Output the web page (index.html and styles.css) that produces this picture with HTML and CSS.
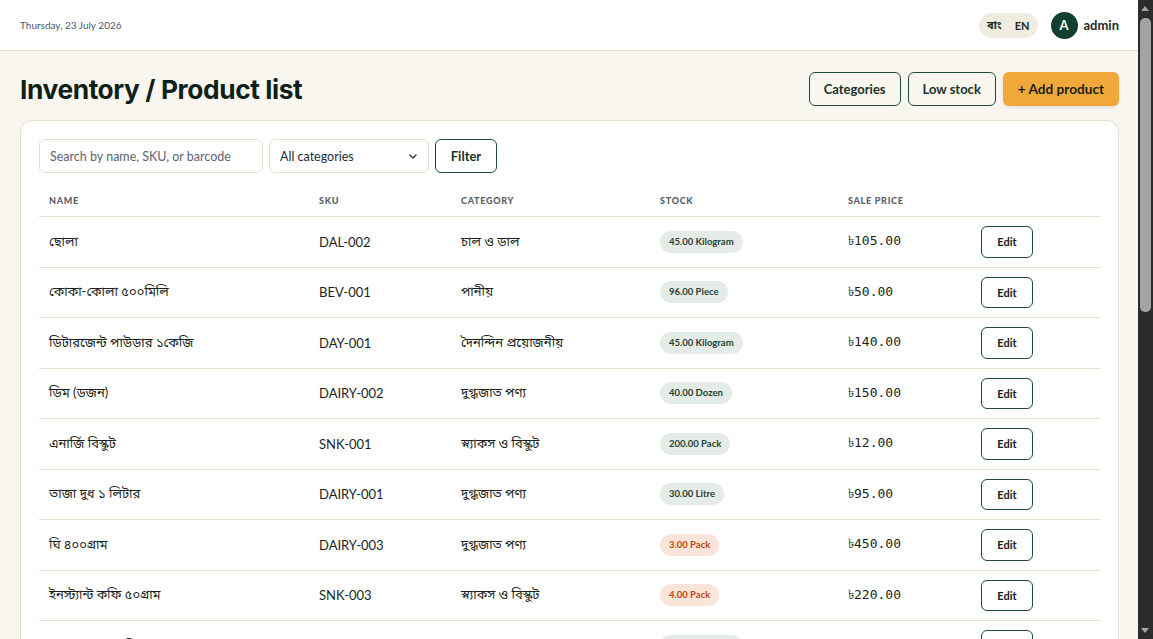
FILE: index.html
```html
<!DOCTYPE html>
<html lang="bn">
<head>
    <meta charset="UTF-8">
    <meta name="viewport" content="width=device-width, initial-scale=1.0">
    <title>Inventory / Product list</title>
    <link rel="stylesheet" href="styles.css">
</head>
<body>
    <header class="topbar">
        <div class="today">Thursday, 23 July 2026</div>
        <div class="topbar-right">
            <div class="lang-switch">
                <span class="lang">বাং</span>
                <span class="lang">EN</span>
            </div>
            <div class="user">
                <span class="avatar">A</span>
                <span class="user-name">admin</span>
            </div>
        </div>
    </header>

    <main class="page">
        <div class="page-head">
            <h1>Inventory / Product list</h1>
            <div class="page-actions">
                <button class="btn btn-outline">Categories</button>
                <button class="btn btn-outline">Low stock</button>
                <button class="btn btn-primary">+ Add product</button>
            </div>
        </div>

        <section class="card">
            <form class="filters">
                <input type="text" class="field field-search" placeholder="Search by name, SKU, or barcode">
                <div class="select-wrap">
                    <select class="field field-select">
                        <option>All categories</option>
                    </select>
                    <svg class="chevron" width="12" height="12" viewBox="0 0 12 12"><path d="M2.5 4.5 6 8l3.5-3.5" fill="none" stroke="#333" stroke-width="1.3"/></svg>
                </div>
                <button type="button" class="btn btn-outline btn-filter">Filter</button>
            </form>

            <table class="products">
                <colgroup>
                    <col style="width: 270px">
                    <col style="width: 142px">
                    <col style="width: 199px">
                    <col style="width: 188px">
                    <col style="width: 133px">
                    <col>
                </colgroup>
                <thead>
                    <tr>
                        <th>Name</th>
                        <th>SKU</th>
                        <th>Category</th>
                        <th>Stock</th>
                        <th>Sale price</th>
                        <th></th>
                    </tr>
                </thead>
                <tbody>
                    <tr>
                        <td>ছোলা</td>
                        <td>DAL-002</td>
                        <td>চাল ও ডাল</td>
                        <td><span class="badge">45.00 Kilogram</span></td>
                        <td class="price">৳105.00</td>
                        <td><button class="btn-edit">Edit</button></td>
                    </tr>
                    <tr>
                        <td>কোকা-কোলা ৫০০মিলি</td>
                        <td>BEV-001</td>
                        <td>পানীয়</td>
                        <td><span class="badge">96.00 Piece</span></td>
                        <td class="price">৳50.00</td>
                        <td><button class="btn-edit">Edit</button></td>
                    </tr>
                    <tr>
                        <td>ডিটারজেন্ট পাউডার ১কেজি</td>
                        <td>DAY-001</td>
                        <td>দৈনন্দিন প্রয়োজনীয়</td>
                        <td><span class="badge">45.00 Kilogram</span></td>
                        <td class="price">৳140.00</td>
                        <td><button class="btn-edit">Edit</button></td>
                    </tr>
                    <tr>
                        <td>ডিম (ডজন)</td>
                        <td>DAIRY-002</td>
                        <td>দুগ্ধজাত পণ্য</td>
                        <td><span class="badge">40.00 Dozen</span></td>
                        <td class="price">৳150.00</td>
                        <td><button class="btn-edit">Edit</button></td>
                    </tr>
                    <tr>
                        <td>এনার্জি বিস্কুট</td>
                        <td>SNK-001</td>
                        <td>স্ন্যাকস ও বিস্কুট</td>
                        <td><span class="badge">200.00 Pack</span></td>
                        <td class="price">৳12.00</td>
                        <td><button class="btn-edit">Edit</button></td>
                    </tr>
                    <tr>
                        <td>তাজা দুধ ১ লিটার</td>
                        <td>DAIRY-001</td>
                        <td>দুগ্ধজাত পণ্য</td>
                        <td><span class="badge">30.00 Litre</span></td>
                        <td class="price">৳95.00</td>
                        <td><button class="btn-edit">Edit</button></td>
                    </tr>
                    <tr>
                        <td>ঘি ৪০০গ্রাম</td>
                        <td>DAIRY-003</td>
                        <td>দুগ্ধজাত পণ্য</td>
                        <td><span class="badge badge-low">3.00 Pack</span></td>
                        <td class="price">৳450.00</td>
                        <td><button class="btn-edit">Edit</button></td>
                    </tr>
                    <tr>
                        <td>ইনস্ট্যান্ট কফি ৫০গ্রাম</td>
                        <td>SNK-003</td>
                        <td>স্ন্যাকস ও বিস্কুট</td>
                        <td><span class="badge badge-low">4.00 Pack</span></td>
                        <td class="price">৳220.00</td>
                        <td><button class="btn-edit">Edit</button></td>
                    </tr>
                    <tr>
                        <td>মসুর ডাল ১কেজি</td>
                        <td>DAL-001</td>
                        <td>চাল ও ডাল</td>
                        <td><span class="badge">60.00 Kilogram</span></td>
                        <td class="price">৳135.00</td>
                        <td><button class="btn-edit">Edit</button></td>
                    </tr>
                    <tr>
                        <td>মিনারেল ওয়াটার ১ লিটার</td>
                        <td>BEV-002</td>
                        <td>পানীয়</td>
                        <td><span class="badge">120.00 Piece</span></td>
                        <td class="price">৳20.00</td>
                        <td><button class="btn-edit">Edit</button></td>
                    </tr>
                </tbody>
            </table>
        </section>
    </main>

    <!-- полоса прокрутки как на скриншоте -->
    <div class="fake-scrollbar" aria-hidden="true">
        <span class="sb-arrow sb-up"></span>
        <span class="sb-thumb"></span>
        <span class="sb-arrow sb-down"></span>
    </div>
</body>
</html>
```

FILE: styles.css
```css
body {
    margin: 0 15px 0 0;
    font-family: Lato, "Noto Sans", "Noto Sans Bengali", sans-serif;
    background-color: #f9f6ef;
    color: #1b1f1d;
}

.topbar {
    height: 50px;
    background: #fff;
    border-bottom: 1px solid #e7dfcd;
    display: flex;
    align-items: center;
    justify-content: space-between;
    padding: 0 19px 0 20px;
}

.today {
    font-size: 10px;
    color: #4d5868;
}

.topbar-right {
    display: flex;
    align-items: center;
    gap: 13px;
}

.lang-switch {
    display: flex;
    align-items: center;
    gap: 13px;
    height: 25px;
    padding: 0 8px;
    border-radius: 13px;
    background: #f1ece0;
}

.lang {
    font-size: 11px;
    font-weight: 700;
    color: #1c2a25;
}

.user {
    display: flex;
    align-items: center;
    gap: 6px;
}

.avatar {
    width: 27px;
    height: 27px;
    border-radius: 50%;
    background: #133f30;
    color: #fff;
    font-size: 13px;
    font-weight: 700;
    display: flex;
    align-items: center;
    justify-content: center;
}

.user-name {
    font-size: 13px;
    font-weight: 700;
    color: #1c2a25;
}

.page {
    padding: 21px 19px 30px 20px;
}

.page-head {
    display: flex;
    align-items: center;
    justify-content: space-between;
    margin-bottom: 14px;
}

h1 {
    margin: 0;
    font-family: Inter, "Noto Sans", sans-serif;
    font-size: 26.3px;
    font-weight: 700;
    letter-spacing: -0.4px;
    color: #0f1f19;
}

.page-actions {
    display: flex;
    gap: 7px;
}

.btn {
    height: 34px;
    padding: 0 14px;
    border-radius: 6px;
    font-family: Lato, "Noto Sans", sans-serif;
    font-size: 13px;
    font-weight: 700;
    cursor: pointer;
}

.btn-outline {
    background: transparent;
    border: 1px solid #1d4a3a;
    color: #163329;
}

.btn-primary {
    background: #f1a83a;
    border: none;
    color: #1e1e14;
    padding: 0 15px;
    font-size: 13.6px;
    box-shadow: 0 1px 3px rgba(0, 0, 0, 0.12);
}

.card {
    background: #fff;
    border: 1px solid #e7dfcd;
    border-radius: 12px;
    padding: 18px 18px 10px;
}

.filters {
    display: flex;
    gap: 6px;
    margin-bottom: 11px;
}

.field {
    box-sizing: border-box;
    height: 34px;
    border: 1px solid #e6ddcc;
    border-radius: 6px;
    background: #fff;
    font-family: Lato, "Noto Sans", sans-serif;
    font-size: 12.5px;
    color: #1f2a3a;
}

.field-search {
    width: 224px;
    padding: 0 10px;
}

.field-search::placeholder {
    color: #5d6470;
}

.select-wrap {
    position: relative;
}

.field-select {
    width: 160px;
    padding: 0 10px;
    appearance: none;
}

.chevron {
    position: absolute;
    right: 10px;
    top: 11px;
    pointer-events: none;
}

.btn-filter {
    width: 62px;
    padding: 0;
}

.products {
    width: 100%;
    table-layout: fixed;
    border-collapse: collapse;
}

.products th {
    text-align: left;
    font-size: 9px;
    font-weight: 900;
    text-transform: uppercase;
    letter-spacing: 0.08em;
    color: #56606b;
    padding: 11px 10px 9px;
    line-height: 12px;
    border-bottom: 1px solid #e7dfcd;
}

.products td {
    padding: 9px 10px;
    font-size: 13px;
    color: #1b1f1d;
    border-bottom: 1px solid #e7dfcd;
    vertical-align: middle;
    white-space: nowrap;
}

.badge {
    display: inline-block;
    height: 22px;
    line-height: 22px;
    padding: 0 9px;
    border-radius: 11px;
    background: #e5ece8;
    color: #1c4236;
    font-size: 9.5px;
    font-weight: 700;
}

.badge-low {
    background: #fbe4d9;
    color: #bf4514;
}

.price {
    font-family: "DejaVu Sans Mono", "Liberation Mono", monospace;
    font-size: 12.5px;
}

.btn-edit {
    display: block;
    width: 52px;
    height: 31.5px;
    border: 1px solid #1d4a3a;
    border-radius: 6px;
    background: #fff;
    font-family: Lato, "Noto Sans", sans-serif;
    font-size: 11px;
    font-weight: 700;
    color: #14201b;
    cursor: pointer;
}

.fake-scrollbar {
    position: fixed;
    top: 0;
    right: 0;
    bottom: 0;
    width: 15px;
    background: #2c2c2c;
}

.sb-thumb {
    position: absolute;
    left: 2px;
    right: 2px;
    top: 18px;
    height: 294px;
    border-radius: 5px;
    background: #a3a3a3;
}

.sb-arrow {
    position: absolute;
    left: 3px;
    width: 0;
    height: 0;
    border-left: 4.5px solid transparent;
    border-right: 4.5px solid transparent;
}

.sb-up {
    top: 6px;
    border-bottom: 5px solid #a3a3a3;
}

.sb-down {
    bottom: 6px;
    border-top: 5px solid #a3a3a3;
}
```
